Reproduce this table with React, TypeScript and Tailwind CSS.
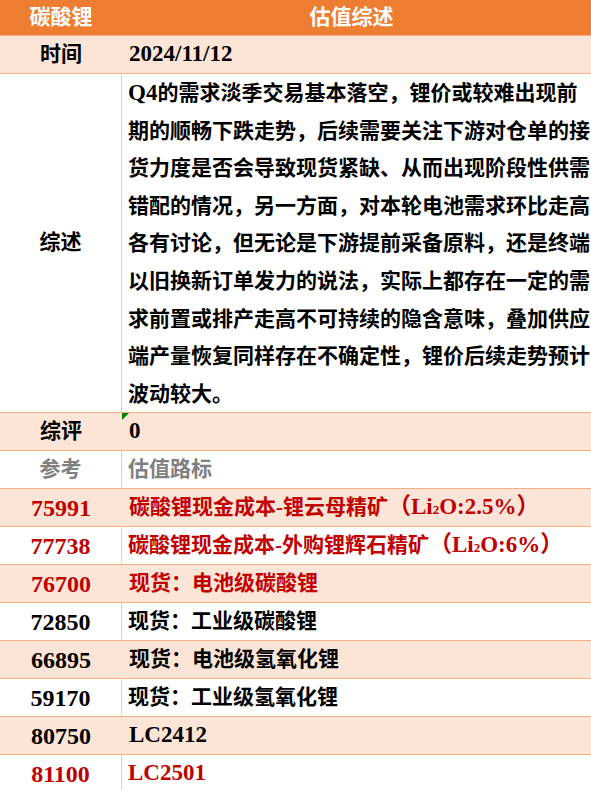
const FONT = { fontFamily: '"Liberation Serif", "Noto Sans CJK SC", serif' };

type Row = {
  num: string;
  label: React.ReactNode;
  red?: boolean;
  peach?: boolean;
};

const Li2O = ({ pct }: { pct: string }) => (
  <span className="text-[23px]">
    （Li<span className="text-[13px]">2</span>O:{pct}）
  </span>
);

const rows: Row[] = [
  {
    num: '75991',
    label: (
      <>
        碳酸锂现金成本-锂云母精矿<Li2O pct="2.5%" />
      </>
    ),
    red: true,
    peach: true,
  },
  {
    num: '77738',
    label: (
      <>
        碳酸锂现金成本-外购锂辉石精矿<Li2O pct="6%" />
      </>
    ),
    red: true,
  },
  { num: '76700', label: '现货：电池级碳酸锂', red: true, peach: true },
  { num: '72850', label: '现货：工业级碳酸锂' },
  { num: '66895', label: '现货：电池级氢氧化锂', peach: true },
  { num: '59170', label: '现货：工业级氢氧化锂' },
  { num: '80750', label: <span className="text-[23px]">LC2412</span>, peach: true },
  { num: '81100', label: <span className="text-[23px]">LC2501</span>, red: true },
];

const summary = [
  <><span className="text-[23px]">Q4</span>的需求淡季交易基本落空，锂价或较难出现前</>,
  '期的顺畅下跌走势，后续需要关注下游对仓单的接',
  '货力度是否会导致现货紧缺、从而出现阶段性供需',
  '错配的情况，另一方面，对本轮电池需求环比走高',
  '各有讨论，但无论是下游提前采备原料，还是终端',
  '以旧换新订单发力的说法，实际上都存在一定的需',
  '求前置或排产走高不可持续的隐含意味，叠加供应',
  '端产量恢复同样存在不确定性，锂价后续走势预计',
  '波动较大。',
];

function TableRow({
  left,
  children,
  peach,
  className,
  leftClass,
  rightClass,
}: {
  left: React.ReactNode;
  children: React.ReactNode;
  peach?: boolean;
  className?: string;
  leftClass?: string;
  rightClass?: string;
}) {
  return (
    <div
      className={`flex border-t border-[#F4B084] ${peach ? 'bg-[#FCE4D6]' : 'bg-white'} ${className ?? 'h-[38px]'}`}
    >
      <div
        className={`w-[122px] shrink-0 flex items-center justify-center ${peach ? '' : 'border-r border-[#D4D4D4]'} ${leftClass ?? ''}`}
      >
        {left}
      </div>
      <div className={`relative flex-1 flex items-center whitespace-nowrap ${peach ? 'pl-[7px]' : 'pl-[6px]'} ${rightClass ?? ''}`}>
        {children}
      </div>
    </div>
  );
}

export default function App() {
  return (
    <div className="w-[591px] h-[790px] overflow-hidden bg-white text-[21px] font-bold text-black" style={FONT}>
      {/* header */}
      <div className="flex h-[35px] bg-[#ED7D31] text-white">
        <div className="w-[122px] flex items-center justify-center">碳酸锂</div>
        <div className="flex-1 flex items-center justify-center pr-[10px]">估值综述</div>
      </div>

      <TableRow left="时间" peach>
        <span className="text-[23px]">2024/11/12</span>
      </TableRow>

      <TableRow left="综述" className="h-[339px]" rightClass="!items-start">
        <div className="leading-[37.6px]">
          {summary.map((line, i) => (
            <div key={i}>{line}</div>
          ))}
        </div>
      </TableRow>

      <TableRow left="综评" peach>
        <span className="absolute left-0 top-0 w-0 h-0 border-t-[7px] border-r-[7px] border-t-[#008000] border-r-transparent" />
        <span className="text-[23px]">0</span>
      </TableRow>

      <TableRow left="参考" leftClass="text-[#808080]" rightClass="text-[#808080]">
        估值路标
      </TableRow>

      {rows.map((r) => (
        <TableRow
          key={r.num}
          peach={r.peach}
          left={<span className="text-[24px]">{r.num}</span>}
          leftClass={r.red ? 'text-[#C00000]' : ''}
          rightClass={r.red ? 'text-[#C00000]' : ''}
        >
          {r.label}
        </TableRow>
      ))}
    </div>
  );
}
